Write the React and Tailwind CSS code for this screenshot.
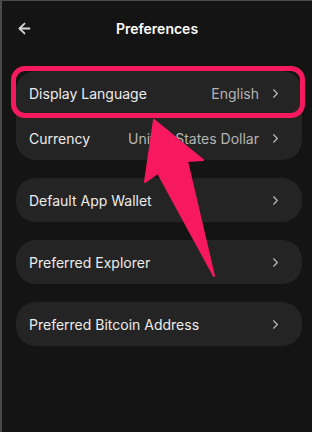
import React from "react";
import { ArrowLeft, ChevronRight } from "lucide-react";

// Fila de preferencias
function Row({ label, value }) {
  return (
    <div className="flex h-[44px] items-center justify-between pl-[13px] pr-[19px]">
      <span className="text-[14px] text-[#ececec]">{label}</span>
      <div className="flex items-center gap-[9px]">
        {value && <span className="text-[14px] text-[#b4b4b4]">{value}</span>}
        <ChevronRight size={15} strokeWidth={1.75} className="text-[#bdbdbd]" />
      </div>
    </div>
  );
}

export default function App() {
  return (
    <div
      className="relative h-[432px] w-[312px] overflow-hidden border-l-2 border-t border-[#4a4a4a] bg-[#141414]"
      style={{ fontFamily: "Inter, 'Noto Sans', sans-serif" }}
    >
      {/* Cabecera */}
      <div className="relative flex h-[55px] items-center justify-center">
        <ArrowLeft size={17} strokeWidth={2.5} className="absolute left-[14px] text-[#d6d6d6]" />
        <span className="text-[14px] font-semibold text-white">Preferences</span>
      </div>

      {/* Lista */}
      <div className="mt-[15px] flex flex-col gap-[18px] pl-[14px] pr-[10px]">
        <div className="flex flex-col gap-[1px] rounded-[20px] bg-[#242424]">
          <Row label="Display Language" value="English" />
          <Row label="Currency" value="United States Dollar" />
        </div>
        <div className="rounded-[20px] bg-[#242424]">
          <Row label="Default App Wallet" />
        </div>
        <div className="rounded-[20px] bg-[#242424]">
          <Row label="Preferred Explorer" />
        </div>
        <div className="rounded-[20px] bg-[#242424]">
          <Row label="Preferred Bitcoin Address" />
        </div>
      </div>

      {/* Resaltado rosa */}
      <div className="absolute left-[9px] top-[65px] h-[52px] w-[294px] rounded-[14px] border-[5px] border-[#f7195f]" />

      {/* Flecha */}
      <svg className="absolute left-0 top-0" width="312" height="432" viewBox="0 0 312 432">
        <path
          d="M152 119 L201 159 L185 160 L212 275 L156 172 L143 181 Z"
          fill="#f7195f"
          stroke="#f7195f"
          strokeWidth="2"
          strokeLinejoin="round"
        />
      </svg>
    </div>
  );
}
